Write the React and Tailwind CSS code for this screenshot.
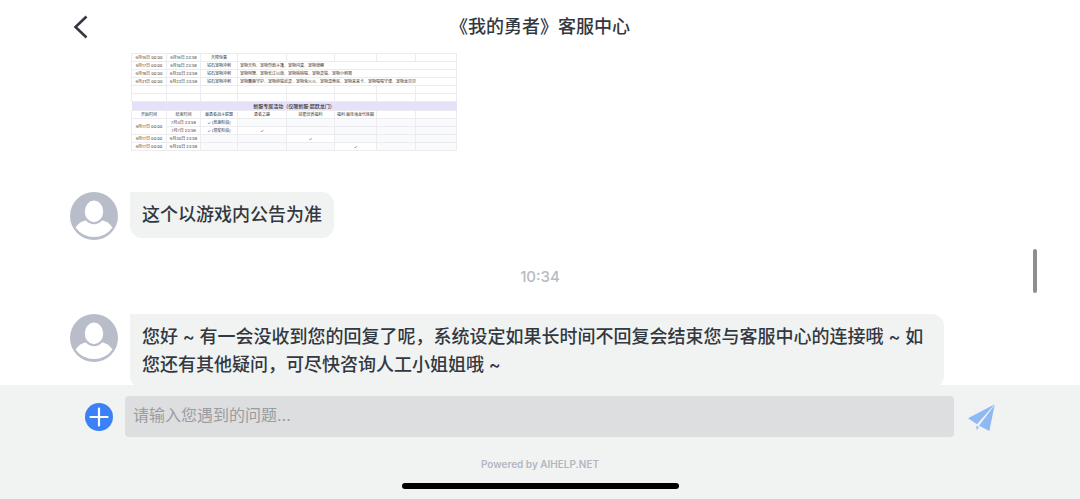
import React, { useState } from 'react';

const pageFont = 'font-["Inter","Noto_Sans_CJK_SC",sans-serif]';

const Avatar = () => (
  <svg viewBox="0 0 48 48" className="w-12 h-12 shrink-0" role="img" aria-label="客服">
    <circle cx="24" cy="24" r="24" fill="#b8bdc9" />
    <path d="M5.5 35.5 Q10 28.5 18 28 H30 Q38 28.5 42.5 35.5 A22.6 22.6 0 0 1 5.5 35.5Z" fill="#fff" />
    <ellipse cx="24" cy="19.4" rx="10.2" ry="11.8" fill="#fff" stroke="#b8bdc9" strokeWidth="2" />
  </svg>
);

const Message = ({ children }) => (
  <div className="flex items-start gap-3">
    <Avatar />
    <p className="max-w-[814px] px-3 py-[9px] rounded-xl rounded-tl-none bg-[#f1f3f3] text-lg leading-7 font-medium text-[#333840]">
      {children}
    </p>
  </div>
);

const petRows = [
  ['6月16日 00:00', '6月16日 23:59', '天降惊喜', ''],
  ['6月17日 00:00', '6月18日 23:59', '钻石宠物冲刺', '宠物天狗、宠物烈焰斗篷、宠物闪蛋、宠物锦鲤'],
  ['6月19日 00:00', '6月20日 23:59', '钻石宠物冲刺', '宠物阿狸、宠物长江以南、宠物桃桃喵、宠物灵猫、宠物小刺猬'],
  ['6月21日 00:00', '6月22日 23:59', '钻石宠物冲刺', '宠物麋鹿守护、宠物熊猫武灵、宠物兔火火、宠物温蒂尼、宠物来来卡、宠物喵喵守课、宠物龙贝贝'],
  ['', '', '', ''],
  ['', '', '', ''],
];

const cell = 'h-2 p-0 border border-[#ececf0] overflow-hidden';
const shade = 'bg-[#f8fafc]';

// Planilha de atividades enviada na conversa
const Schedule = () => (
  <table className="w-[325px] table-fixed border-collapse text-center text-[4px] leading-[6px] text-[#333] whitespace-nowrap">
    <colgroup>
      <col className="w-[35px]" />
      <col className="w-[34px]" />
      <col className="w-[37px]" />
      <col className="w-[49px]" />
      <col className="w-[48px]" />
      <col className="w-[42px]" />
      <col className="w-[39px]" />
      <col className="w-[41px]" />
    </colgroup>
    <tbody>
      {petRows.map(([start, end, type, pets], i) => (
        <tr key={i}>
          <td className={cell}>{start}</td>
          <td className={cell}>{end}</td>
          <td className={cell}>{type}</td>
          {pets ? (
            <td colSpan={5} className={`${cell} text-left pl-0.5`}>{pets}</td>
          ) : (
            [0, 1, 2, 3, 4].map((n) => <td key={n} className={cell} />)
          )}
        </tr>
      ))}
      <tr>
        <th colSpan={8} className="h-[9px] p-0 bg-[#e6e0f8] text-[5px] font-medium">新服专属活动（仅限新服·超跃龙门）</th>
      </tr>
      <tr>
        {['开始时间', '结束时间', '最勇者战斗联盟', '勇者之路', '技能培养福利', '福利·最佳海龙代练圈', '', ''].map((name, i) => (
          <td key={i} className={cell}>{name}</td>
        ))}
      </tr>
      <tr>
        <td rowSpan={2} className={cell}>6月17日 00:00</td>
        <td className={cell}>7月3日 23:59</td>
        <td className={cell}>✓ (竞速阶段)</td>
        {[0, 1, 2, 3, 4].map((n) => <td key={n} className={`${cell} ${shade}`} />)}
      </tr>
      <tr>
        <td className={cell}>7月7日 23:59</td>
        <td className={cell}>✓ (领奖阶段)</td>
        <td className={cell}>✓</td>
        {[0, 1, 2, 3].map((n) => <td key={n} className={`${cell} ${shade}`} />)}
      </tr>
      <tr>
        <td className={cell}>6月17日 00:00</td>
        <td className={cell}>6月30日 23:59</td>
        <td className={`${cell} ${shade}`} />
        <td className={`${cell} ${shade}`} />
        <td className={cell}>✓</td>
        {[0, 1, 2].map((n) => <td key={n} className={`${cell} ${shade}`} />)}
      </tr>
      <tr>
        <td className={cell}>6月17日 00:00</td>
        <td className={cell}>6月20日 23:59</td>
        {[0, 1, 2].map((n) => <td key={n} className={`${cell} ${shade}`} />)}
        <td className={cell}>✓</td>
        {[0, 1].map((n) => <td key={n} className={`${cell} ${shade}`} />)}
      </tr>
    </tbody>
  </table>
);

const App = () => {
  const [text, setText] = useState('');

  return (
    <div lang="zh-CN" className={`${pageFont} relative h-screen flex flex-col bg-white overflow-hidden`}>
      <header className="grid grid-cols-[1fr_auto_1fr] items-center h-[53px] shrink-0 px-[70px]">
        <button type="button" aria-label="返回" className="w-6 h-6 text-[#333840]">
          <svg viewBox="0 0 24 24" className="w-6 h-6" fill="none" stroke="currentColor" strokeWidth="2.6">
            <path d="M16.5 1.5 L5.5 12 L16.5 22.5" />
          </svg>
        </button>
        <h1 className="text-lg font-medium text-[#333840]">《我的勇者》客服中心</h1>
      </header>

      <main className="flex-1 min-h-0 overflow-hidden px-[70px]">
        <div className="pl-[61px] pb-[41px]">
          <Schedule />
        </div>
        <Message>这个以游戏内公告为准</Message>
        <time className="block py-6 text-center text-[15px] leading-[26px] font-medium text-[#b8bbc1]">10:34</time>
        <Message>
          您好 ~ 有一会没收到您的回复了呢，系统设定如果长时间不回复会结束您与客服中心的连接哦 ~ 如您还有其他疑问，可尽快咨询人工小姐姐哦 ~
        </Message>
      </main>

      <div className="absolute right-[43px] top-[249px] w-1 h-11 rounded-full bg-[#8f8f91]" />

      <footer className="shrink-0 h-[114px] pt-[11px] bg-[#f1f3f3]">
        <form className="flex items-center gap-3 pl-[85px] pr-[84px]" onSubmit={(e) => e.preventDefault()}>
          <button type="button" aria-label="添加附件" className="w-7 h-7 shrink-0">
            <svg viewBox="0 0 28 28" className="w-7 h-7">
              <circle cx="14" cy="14" r="14" fill="#3b80f6" />
              <path d="M14 5.5 V22.5 M5.5 14 H22.5" stroke="#fff" strokeWidth="2.2" strokeLinecap="round" />
            </svg>
          </button>
          <input
            type="text"
            aria-label="问题"
            value={text}
            onChange={(e) => setText(e.target.value)}
            placeholder="请输入您遇到的问题..."
            className="flex-1 min-w-0 h-[41px] px-2 pb-1 rounded bg-[#dddee0] text-base text-[#333840] placeholder:text-[#9b9c9f] outline-none"
          />
          <button type="submit" aria-label="发送" className="w-[30px] h-[30px] shrink-0">
            <svg viewBox="318 303 90 90" className="w-[30px] h-[30px]" fill="#8fb9f5">
              <path d="M324 352 L404 310 L351 370 Z" />
              <path d="M404 312 L388 390 L357 374 Z" />
              <path d="M349 374 L357 378 L350 388 Z" />
            </svg>
          </button>
        </form>
        <p className="mt-[19px] text-center text-[10px] leading-4 font-semibold text-[#b3b6bf]">Powered by AIHELP.NET</p>
        <div className="mt-[11px] mx-auto w-[277px] h-[6px] rounded-full bg-black" />
      </footer>
    </div>
  );
};

export default App;
